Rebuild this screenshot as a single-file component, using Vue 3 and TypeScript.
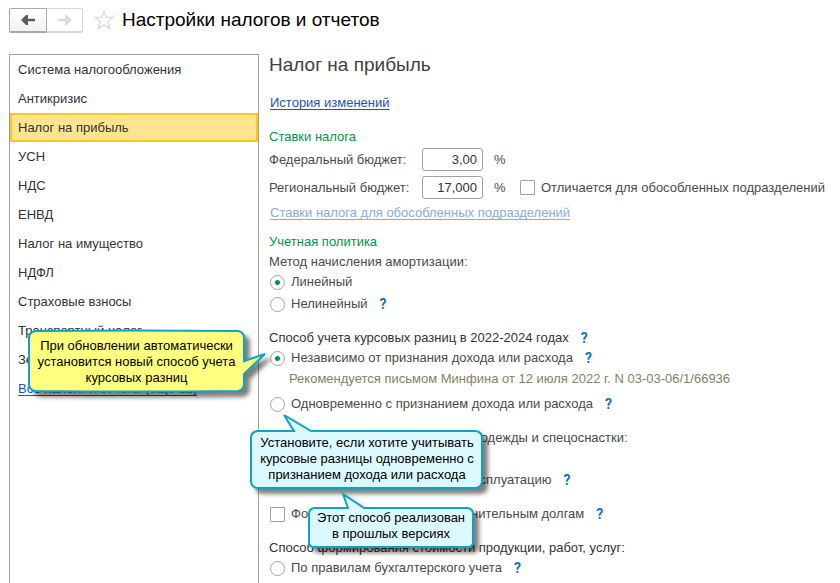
<script setup lang="ts">
import { ref } from 'vue'

interface Callout {
  id: string
  lines: string[]
  path: string
  width: number
  height: number
}

const sections: string[] = [
  'Система налогообложения',
  'Антикризис',
  'Налог на прибыль',
  'УСН',
  'НДС',
  'ЕНВД',
  'Налог на имущество',
  'НДФЛ',
  'Страховые взносы',
  'Транспортный налог',
  'Земельный налог',
]
const active = ref('Налог на прибыль')

const federal = ref('3,00')
const regional = ref('17,000')
const differs = ref(false)
const depreciation = ref('linear')
const rateDiff = ref('independent')
const workwear = ref('')
const reserve = ref(false)
const costMethod = ref('')

const callouts: Callout[] = [
  {
    id: 'update',
    lines: ['При обновлении автоматически', 'установится новый способ учета', 'курсовых разниц'],
    width: 238,
    height: 64,
    path: 'M7 2Q109 1 210 2Q216 3 216 9V32L237 25L216 45V55Q216 61 210 62Q109 63 7 62Q1 61 1 55V9Q1 3 7 2Z',
  },
  {
    id: 'choose',
    lines: ['Установите, если хотите учитывать', 'курсовые разницы одновременно с', 'признанием дохода или расхода'],
    width: 234,
    height: 76,
    path: 'M7 17H44L34 1L61 17H226Q232 18 232 24V67Q232 73 226 74H7Q1 73 1 67V24Q1 18 7 17Z',
  },
  {
    id: 'past',
    lines: ['Этот способ реализован', 'в прошлых версиях'],
    width: 166,
    height: 56,
    path: 'M6 15H40L35 1L56 15H160Q165 16 165 21V49Q165 54 160 54H6Q1 54 1 49V21Q1 16 6 15Z',
  },
]
</script>

<template>
  <div class="page">
    <header class="top">
      <div class="nav">
        <button type="button" class="nav-btn" aria-label="Назад">
          <svg width="16" height="12" viewBox="0 0 16 12"><path d="M1 6L6 1H8V4.7H15V7.3H8V11H6Z" fill="#5e5e5e" /></svg>
        </button>
        <button type="button" class="nav-btn off" aria-label="Вперед" disabled>
          <svg width="16" height="12" viewBox="0 0 16 12"><path d="M15 6L10 1H8V4.7H1V7.3H8V11H10Z" fill="#dcdcdc" /></svg>
        </button>
      </div>
      <button type="button" class="star" aria-label="В избранное">
        <svg width="20" height="20" viewBox="0 0 20 20"><path d="M10 1L12.4 7.4H19L13.8 11.7L15.8 18.7L10 14.7L4.2 18.7L6.2 11.7L1 7.4H7.6Z" fill="none" stroke="#d8d8d8" stroke-width="1.2" /></svg>
      </button>
      <h1>Настройки налогов и отчетов</h1>
    </header>

    <div class="body">
      <nav class="side">
        <button
          v-for="s in sections"
          :key="s"
          type="button"
          class="item"
          :class="{ active: s === active }"
          @click="active = s"
        >{{ s }}</button>
        <a href="#" class="item link">Все налоги и отчеты (еще 12)</a>
      </nav>

      <main class="main">
        <h2>Налог на прибыль</h2>
        <p class="row history"><a href="#" class="link">История изменений</a></p>

        <section>
          <h3>Ставки налога</h3>
          <div class="rates">
            <div class="rate">
              <label for="fed" class="rate-label">Федеральный бюджет:</label>
              <input id="fed" v-model="federal" type="text" class="num" />
              <span class="pct">%</span>
            </div>
            <div class="rate">
              <label for="reg" class="rate-label">Региональный бюджет:</label>
              <input id="reg" v-model="regional" type="text" class="num" />
              <span class="pct">%</span>
              <label class="option"><input v-model="differs" type="checkbox" class="check" />Отличается для обособленных подразделений</label>
            </div>
          </div>
          <p class="row rates-link"><a href="#" class="link faded">Ставки налога для обособленных подразделений</a></p>
        </section>

        <section class="policy">
          <h3>Учетная политика</h3>
          <p class="row">Метод начисления амортизации:</p>
          <div class="options">
            <div class="row"><label class="option"><input v-model="depreciation" type="radio" name="dep" value="linear" class="radio" />Линейный</label></div>
            <div class="row"><label class="option"><input v-model="depreciation" type="radio" name="dep" value="nonlinear" class="radio" />Нелинейный</label><a href="#" class="help">?</a></div>
          </div>
        </section>

        <section class="block">
          <p class="row dark">Способ учета курсовых разниц в 2022-2024 годах<a href="#" class="help">?</a></p>
          <div class="row"><label class="option"><input v-model="rateDiff" type="radio" name="diff" value="independent" class="radio" />Независимо от признания дохода или расхода</label><a href="#" class="help">?</a></div>
          <p class="row note">Рекомендуется письмом Минфина от 12 июля 2022 г. N 03-03-06/1/66936</p>
          <div class="row"><label class="option"><input v-model="rateDiff" type="radio" name="diff" value="simultaneous" class="radio" />Одновременно с признанием дохода или расхода</label><a href="#" class="help">?</a></div>
        </section>

        <section class="block">
          <p class="row">Способ погашения стоимости спецодежды и спецоснастки:</p>
          <div class="options">
            <div class="row"><label class="option"><input v-model="workwear" type="radio" name="wear" value="once" class="radio" />Единовременно</label></div>
            <div class="row"><label class="option"><input v-model="workwear" type="radio" name="wear" value="transfer" class="radio" />Указывается при передаче в эксплуатацию</label><a href="#" class="help">?</a></div>
          </div>
        </section>

        <section class="block">
          <div class="row"><label class="option"><input v-model="reserve" type="checkbox" class="check" />Формировать резервы по сомнительным долгам</label><a href="#" class="help">?</a></div>
        </section>

        <section class="block">
          <p class="row dark">Способ формирования стоимости продукции, работ, услуг:</p>
          <div class="row"><label class="option"><input v-model="costMethod" type="radio" name="cost" value="accounting" class="radio" />По правилам бухгалтерского учета</label><a href="#" class="help">?</a></div>
        </section>
      </main>
    </div>

    <aside v-for="c in callouts" :key="c.id" class="callout" :class="c.id">
      <svg class="shape" :width="c.width" :height="c.height" :viewBox="`0 0 ${c.width} ${c.height}`"><path :d="c.path" /></svg>
      <p class="callout-text"><span v-for="l in c.lines" :key="l">{{ l }}</span></p>
    </aside>
  </div>
</template>

<style>
body {
  background: #fff;
}
</style>

<style scoped>
.page {
  position: relative;
  display: flex;
  flex-direction: column;
  box-sizing: border-box;
  min-height: 100vh;
  padding-left: 9px;
  overflow: hidden;
  font: 13px/20px "Liberation Sans", Arial, sans-serif;
  color: #4a4a4a;
  white-space: nowrap;
}
h1, h2, h3, p {
  margin: 0;
  font-weight: 400;
}
button, input {
  font: inherit;
  color: inherit;
  margin: 0;
  box-sizing: border-box;
}
.top {
  display: flex;
  align-items: center;
  height: 24px;
  padding: 8px 0 22px;
}
.nav {
  display: flex;
}
.nav-btn {
  display: flex;
  align-items: center;
  justify-content: center;
  width: 38px;
  height: 25px;
  padding: 0;
  border: 1px solid #aaa;
  border-bottom: 2px solid #a8a8a8;
  border-radius: 2px 0 0 2px;
  background: linear-gradient(#fff, #f2f2f2);
}
.nav-btn.off {
  width: 36px;
  border-color: #d6d6d6;
  border-left: 0;
  border-radius: 0 2px 2px 0;
  background: #fff;
}
.star {
  display: flex;
  margin-left: 11px;
  padding: 0;
  border: 0;
  background: none;
}
h1 {
  margin-left: 8px;
  font-size: 19px;
  line-height: 24px;
  color: #000;
}
.body {
  display: flex;
  flex: 1;
}
.side {
  display: flex;
  flex-direction: column;
  box-sizing: border-box;
  flex: 0 0 250px;
  border: 1px solid #a0a0a0;
  border-bottom: 0;
}
.item {
  height: 29px;
  padding: 0 8px;
  border: 0;
  background: none;
  line-height: 29px;
  text-align: left;
  color: #333;
}
.item.active {
  padding: 0 6px;
  border: 2px solid #fbc71e;
  background: #ffe48f;
  line-height: 25px;
}
.link, .item.link {
  color: #1c55ae;
  text-decoration: underline;
  text-decoration-skip-ink: none;
  text-underline-offset: 2px;
}
.link.faded {
  color: #8eaad6;
}
.main {
  flex: 1;
  min-width: 0;
  padding: 0 8px 3px 10px;
}
h2 {
  height: 23px;
  font-size: 19px;
  line-height: 22px;
  color: #404040;
}
h3 {
  font-size: 13px;
  line-height: 20px;
  color: #009646;
}
.row {
  display: flex;
  align-items: center;
  height: 20px;
}
.history {
  margin: 16px 0 14px;
}
.history, .rates-link {
  padding-left: 1px;
}
.dark {
  color: #333;
}
.rates {
  display: grid;
  gap: 5px;
  padding-top: 1px;
}
.rate {
  display: flex;
  align-items: center;
  height: 23px;
}
.rate-label {
  width: 153px;
}
.num {
  width: 61px;
  height: 23px;
  padding: 0 5px;
  border: 1px solid #a0a0a0;
  border-radius: 3px;
  background: #fff;
  text-align: right;
  color: #333;
}
.pct {
  width: 25px;
  margin-left: 11px;
}
.rates-link {
  margin-top: 4px;
}
.policy {
  margin-top: 9px;
}
.options {
  display: grid;
  gap: 2px;
}
.block {
  margin-top: 14px;
}
.option {
  display: flex;
  align-items: center;
  gap: 6px;
}
.radio, .check {
  appearance: none;
  flex: none;
  width: 15px;
  height: 15px;
  margin-left: 1px;
  border: 1px solid #a0a0a0;
  background: #fff;
}
.radio {
  border-radius: 50%;
}
.check {
  border-radius: 1px;
}
.radio:checked {
  background: radial-gradient(circle, #009646 2px, #fff 3px);
}
.check:checked {
  background: #009646;
}
.help {
  margin-left: 12px;
  font-family: Roboto, "Liberation Sans", sans-serif;
  font-size: 14px;
  font-weight: 700;
  color: #1272c4;
  text-decoration: none;
}
.note {
  margin: 1px 0 5px;
  padding-left: 20px;
  color: #857f63;
}
.callout {
  position: absolute;
  color: #000;
}
.shape {
  display: block;
  overflow: visible;
  fill: #dcf9ff;
  stroke: #11a3c2;
  stroke-width: 2px;
  filter: drop-shadow(5px 5px 2px rgba(0, 0, 0, 0.5));
}
.callout-text {
  position: absolute;
  left: 0;
  bottom: 7px;
  display: flex;
  flex-direction: column;
  width: 100%;
  line-height: 16px;
  text-align: center;
}
.update {
  left: 28px;
  top: 329px;
}
.update .shape {
  fill: #ffff80;
}
.update .callout-text {
  width: 217px;
}
.choose {
  left: 250px;
  top: 414px;
}
.past {
  left: 308px;
  top: 493px;
}
</style>
